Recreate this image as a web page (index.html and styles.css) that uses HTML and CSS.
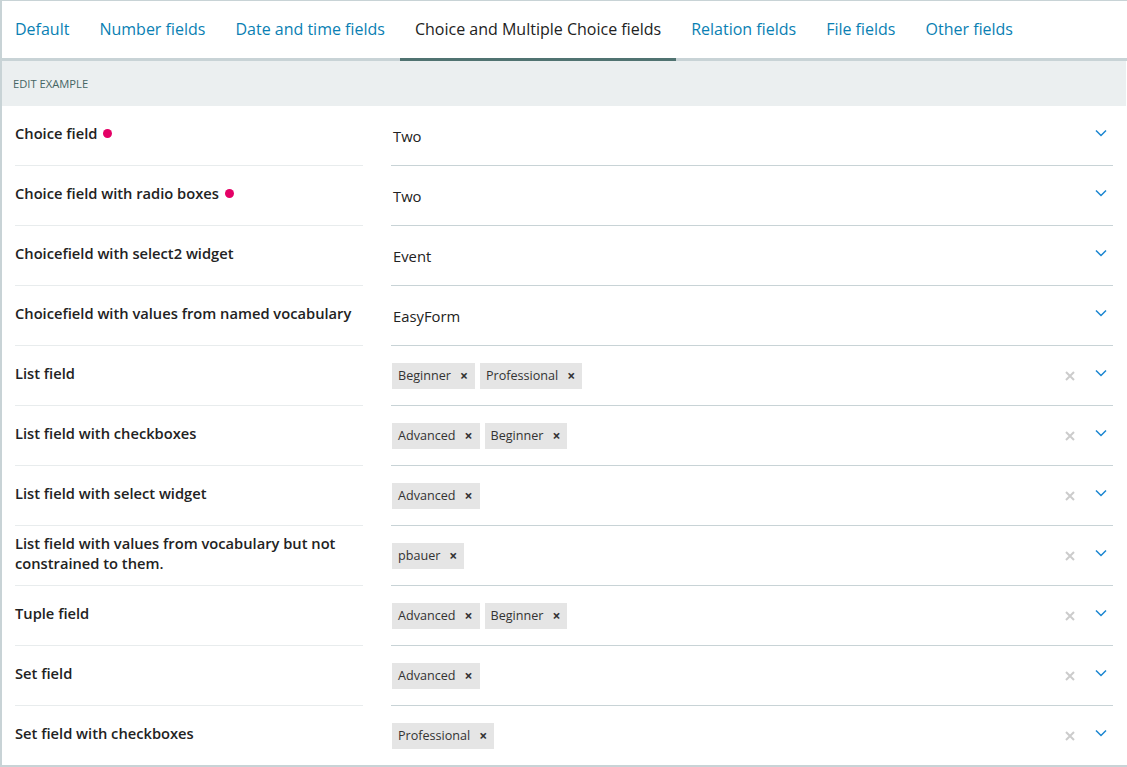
FILE: index.html
```html
<!DOCTYPE html>
<html>
<head>
<meta charset="utf-8">
<link rel="stylesheet" href="styles.css">
</head>
<body>
<div class="panel">
  <nav class="tabs">
    <a class="tab">Default</a>
    <a class="tab">Number fields</a>
    <a class="tab">Date and time fields</a>
    <a class="tab active">Choice and Multiple Choice fields</a>
    <a class="tab">Relation fields</a>
    <a class="tab">File fields</a>
    <a class="tab">Other fields</a>
  </nav>
  <div class="section-head">EDIT EXAMPLE</div>
  <div class="form">
    <div class="row">
      <div class="label">Choice field <span class="req"></span></div>
      <div class="value"><span class="text">Two</span><span class="spacer"></span><span class="chev"><svg width="12" height="8" viewBox="0 0 12 8"><path d="M1 1.5l5 5 5-5" fill="none" stroke="#1a86d0" stroke-width="1.5"/></svg></span></div>
    </div>
    <div class="row">
      <div class="label">Choice field with radio boxes <span class="req"></span></div>
      <div class="value"><span class="text">Two</span><span class="spacer"></span><span class="chev"><svg width="12" height="8" viewBox="0 0 12 8"><path d="M1 1.5l5 5 5-5" fill="none" stroke="#1a86d0" stroke-width="1.5"/></svg></span></div>
    </div>
    <div class="row">
      <div class="label">Choicefield with select2 widget</div>
      <div class="value"><span class="text">Event</span><span class="spacer"></span><span class="chev"><svg width="12" height="8" viewBox="0 0 12 8"><path d="M1 1.5l5 5 5-5" fill="none" stroke="#1a86d0" stroke-width="1.5"/></svg></span></div>
    </div>
    <div class="row">
      <div class="label">Choicefield with values from named vocabulary</div>
      <div class="value"><span class="text">EasyForm</span><span class="spacer"></span><span class="chev"><svg width="12" height="8" viewBox="0 0 12 8"><path d="M1 1.5l5 5 5-5" fill="none" stroke="#1a86d0" stroke-width="1.5"/></svg></span></div>
    </div>
    <div class="row">
      <div class="label">List field</div>
      <div class="value"><span class="tag">Beginner<b>×</b></span><span class="tag">Professional<b>×</b></span><span class="spacer"></span><span class="clear"><svg width="10" height="10" viewBox="0 0 10 10"><path d="M1 1l8 8M9 1l-8 8" stroke="#cccccc" stroke-width="2"/></svg></span><span class="chev"><svg width="12" height="8" viewBox="0 0 12 8"><path d="M1 1.5l5 5 5-5" fill="none" stroke="#1a86d0" stroke-width="1.5"/></svg></span></div>
    </div>
    <div class="row">
      <div class="label">List field with checkboxes</div>
      <div class="value"><span class="tag">Advanced<b>×</b></span><span class="tag">Beginner<b>×</b></span><span class="spacer"></span><span class="clear"><svg width="10" height="10" viewBox="0 0 10 10"><path d="M1 1l8 8M9 1l-8 8" stroke="#cccccc" stroke-width="2"/></svg></span><span class="chev"><svg width="12" height="8" viewBox="0 0 12 8"><path d="M1 1.5l5 5 5-5" fill="none" stroke="#1a86d0" stroke-width="1.5"/></svg></span></div>
    </div>
    <div class="row">
      <div class="label">List field with select widget</div>
      <div class="value"><span class="tag">Advanced<b>×</b></span><span class="spacer"></span><span class="clear"><svg width="10" height="10" viewBox="0 0 10 10"><path d="M1 1l8 8M9 1l-8 8" stroke="#cccccc" stroke-width="2"/></svg></span><span class="chev"><svg width="12" height="8" viewBox="0 0 12 8"><path d="M1 1.5l5 5 5-5" fill="none" stroke="#1a86d0" stroke-width="1.5"/></svg></span></div>
    </div>
    <div class="row">
      <div class="label">List field with values from vocabulary but not constrained to them.</div>
      <div class="value"><span class="tag">pbauer<b>×</b></span><span class="spacer"></span><span class="clear"><svg width="10" height="10" viewBox="0 0 10 10"><path d="M1 1l8 8M9 1l-8 8" stroke="#cccccc" stroke-width="2"/></svg></span><span class="chev"><svg width="12" height="8" viewBox="0 0 12 8"><path d="M1 1.5l5 5 5-5" fill="none" stroke="#1a86d0" stroke-width="1.5"/></svg></span></div>
    </div>
    <div class="row">
      <div class="label">Tuple field</div>
      <div class="value"><span class="tag">Advanced<b>×</b></span><span class="tag">Beginner<b>×</b></span><span class="spacer"></span><span class="clear"><svg width="10" height="10" viewBox="0 0 10 10"><path d="M1 1l8 8M9 1l-8 8" stroke="#cccccc" stroke-width="2"/></svg></span><span class="chev"><svg width="12" height="8" viewBox="0 0 12 8"><path d="M1 1.5l5 5 5-5" fill="none" stroke="#1a86d0" stroke-width="1.5"/></svg></span></div>
    </div>
    <div class="row">
      <div class="label">Set field</div>
      <div class="value"><span class="tag">Advanced<b>×</b></span><span class="spacer"></span><span class="clear"><svg width="10" height="10" viewBox="0 0 10 10"><path d="M1 1l8 8M9 1l-8 8" stroke="#cccccc" stroke-width="2"/></svg></span><span class="chev"><svg width="12" height="8" viewBox="0 0 12 8"><path d="M1 1.5l5 5 5-5" fill="none" stroke="#1a86d0" stroke-width="1.5"/></svg></span></div>
    </div>
    <div class="row">
      <div class="label">Set field with checkboxes</div>
      <div class="value"><span class="tag">Professional<b>×</b></span><span class="spacer"></span><span class="clear"><svg width="10" height="10" viewBox="0 0 10 10"><path d="M1 1l8 8M9 1l-8 8" stroke="#cccccc" stroke-width="2"/></svg></span><span class="chev"><svg width="12" height="8" viewBox="0 0 12 8"><path d="M1 1.5l5 5 5-5" fill="none" stroke="#1a86d0" stroke-width="1.5"/></svg></span></div>
    </div>
  </div>
</div>
</body>
</html>
```

FILE: styles.css
```css
* { box-sizing: border-box; }
html, body { margin: 0; padding: 0; background: #fff; }
body {
  font-family: "Open Sans", "Noto Sans", sans-serif;
  color: #222;
  overflow: hidden;
}
.panel {
  width: 1127px;
  height: 767px;
  border-top: 1px solid #c8d3d6;
  border-left: 2px solid #c8d3d6;
  border-bottom: 2px solid #c8d3d6;
  overflow: hidden;
}
.tabs {
  display: flex;
  height: 60px;
  border-bottom: 3px solid #c8d3d6;
}
.tab {
  display: flex;
  align-items: center;
  padding: 0 15px 1px 15px;
  margin-bottom: -3px;
  border-bottom: 3px solid transparent;
  font-size: 16px;
  color: #0a7fb3;
  white-space: nowrap;
}
.tab:first-child { padding-left: 13px; }
.tab.active {
  color: #222;
  border-bottom-color: #507371;
}
.section-head {
  height: 45px;
  background: #ebeff0;
  display: flex;
  align-items: center;
  padding-left: 11px;
  font-size: 11.2px;
  color: #456563;
  margin-right: 1px;
}
.form {
  padding-left: 13px;
}
.row {
  display: flex;
  height: 60px;
  gap: 28px;
}
.label {
  width: 348px;
  flex: none;
  border-bottom: 1px solid #e8eced;
  display: flex;
  align-items: center;
  font-size: 14.7px;
  font-weight: 600;
  line-height: 20px;
  padding-bottom: 5px;
  color: #222;
}
.req {
  display: inline-block;
  width: 9px;
  height: 9px;
  border-radius: 50%;
  background: #e40166;
  margin-left: 6px;
  flex: none;
}
.value {
  width: 722px;
  flex: none;
  border-bottom: 1px solid #c8d3d6;
  display: flex;
  align-items: center;
  padding-left: 1px;
  gap: 5px;
  font-size: 14.8px;
}
.text { padding-left: 1px; }
.tag {
  display: inline-flex;
  align-items: center;
  height: 26px;
  background: #e5e5e5;
  padding: 0 7px 0 6px;
  font-size: 12.6px;
  color: #333;
}
.tag b {
  font-size: 14px;
  font-weight: 700;
  margin-left: 9px;
  line-height: 1;
}
.spacer { flex: 1; }
.clear { display: flex; width: 10px; margin-right: 15px; }
.chev { display: flex; margin-right: 6px; margin-top: -5px; }
```
